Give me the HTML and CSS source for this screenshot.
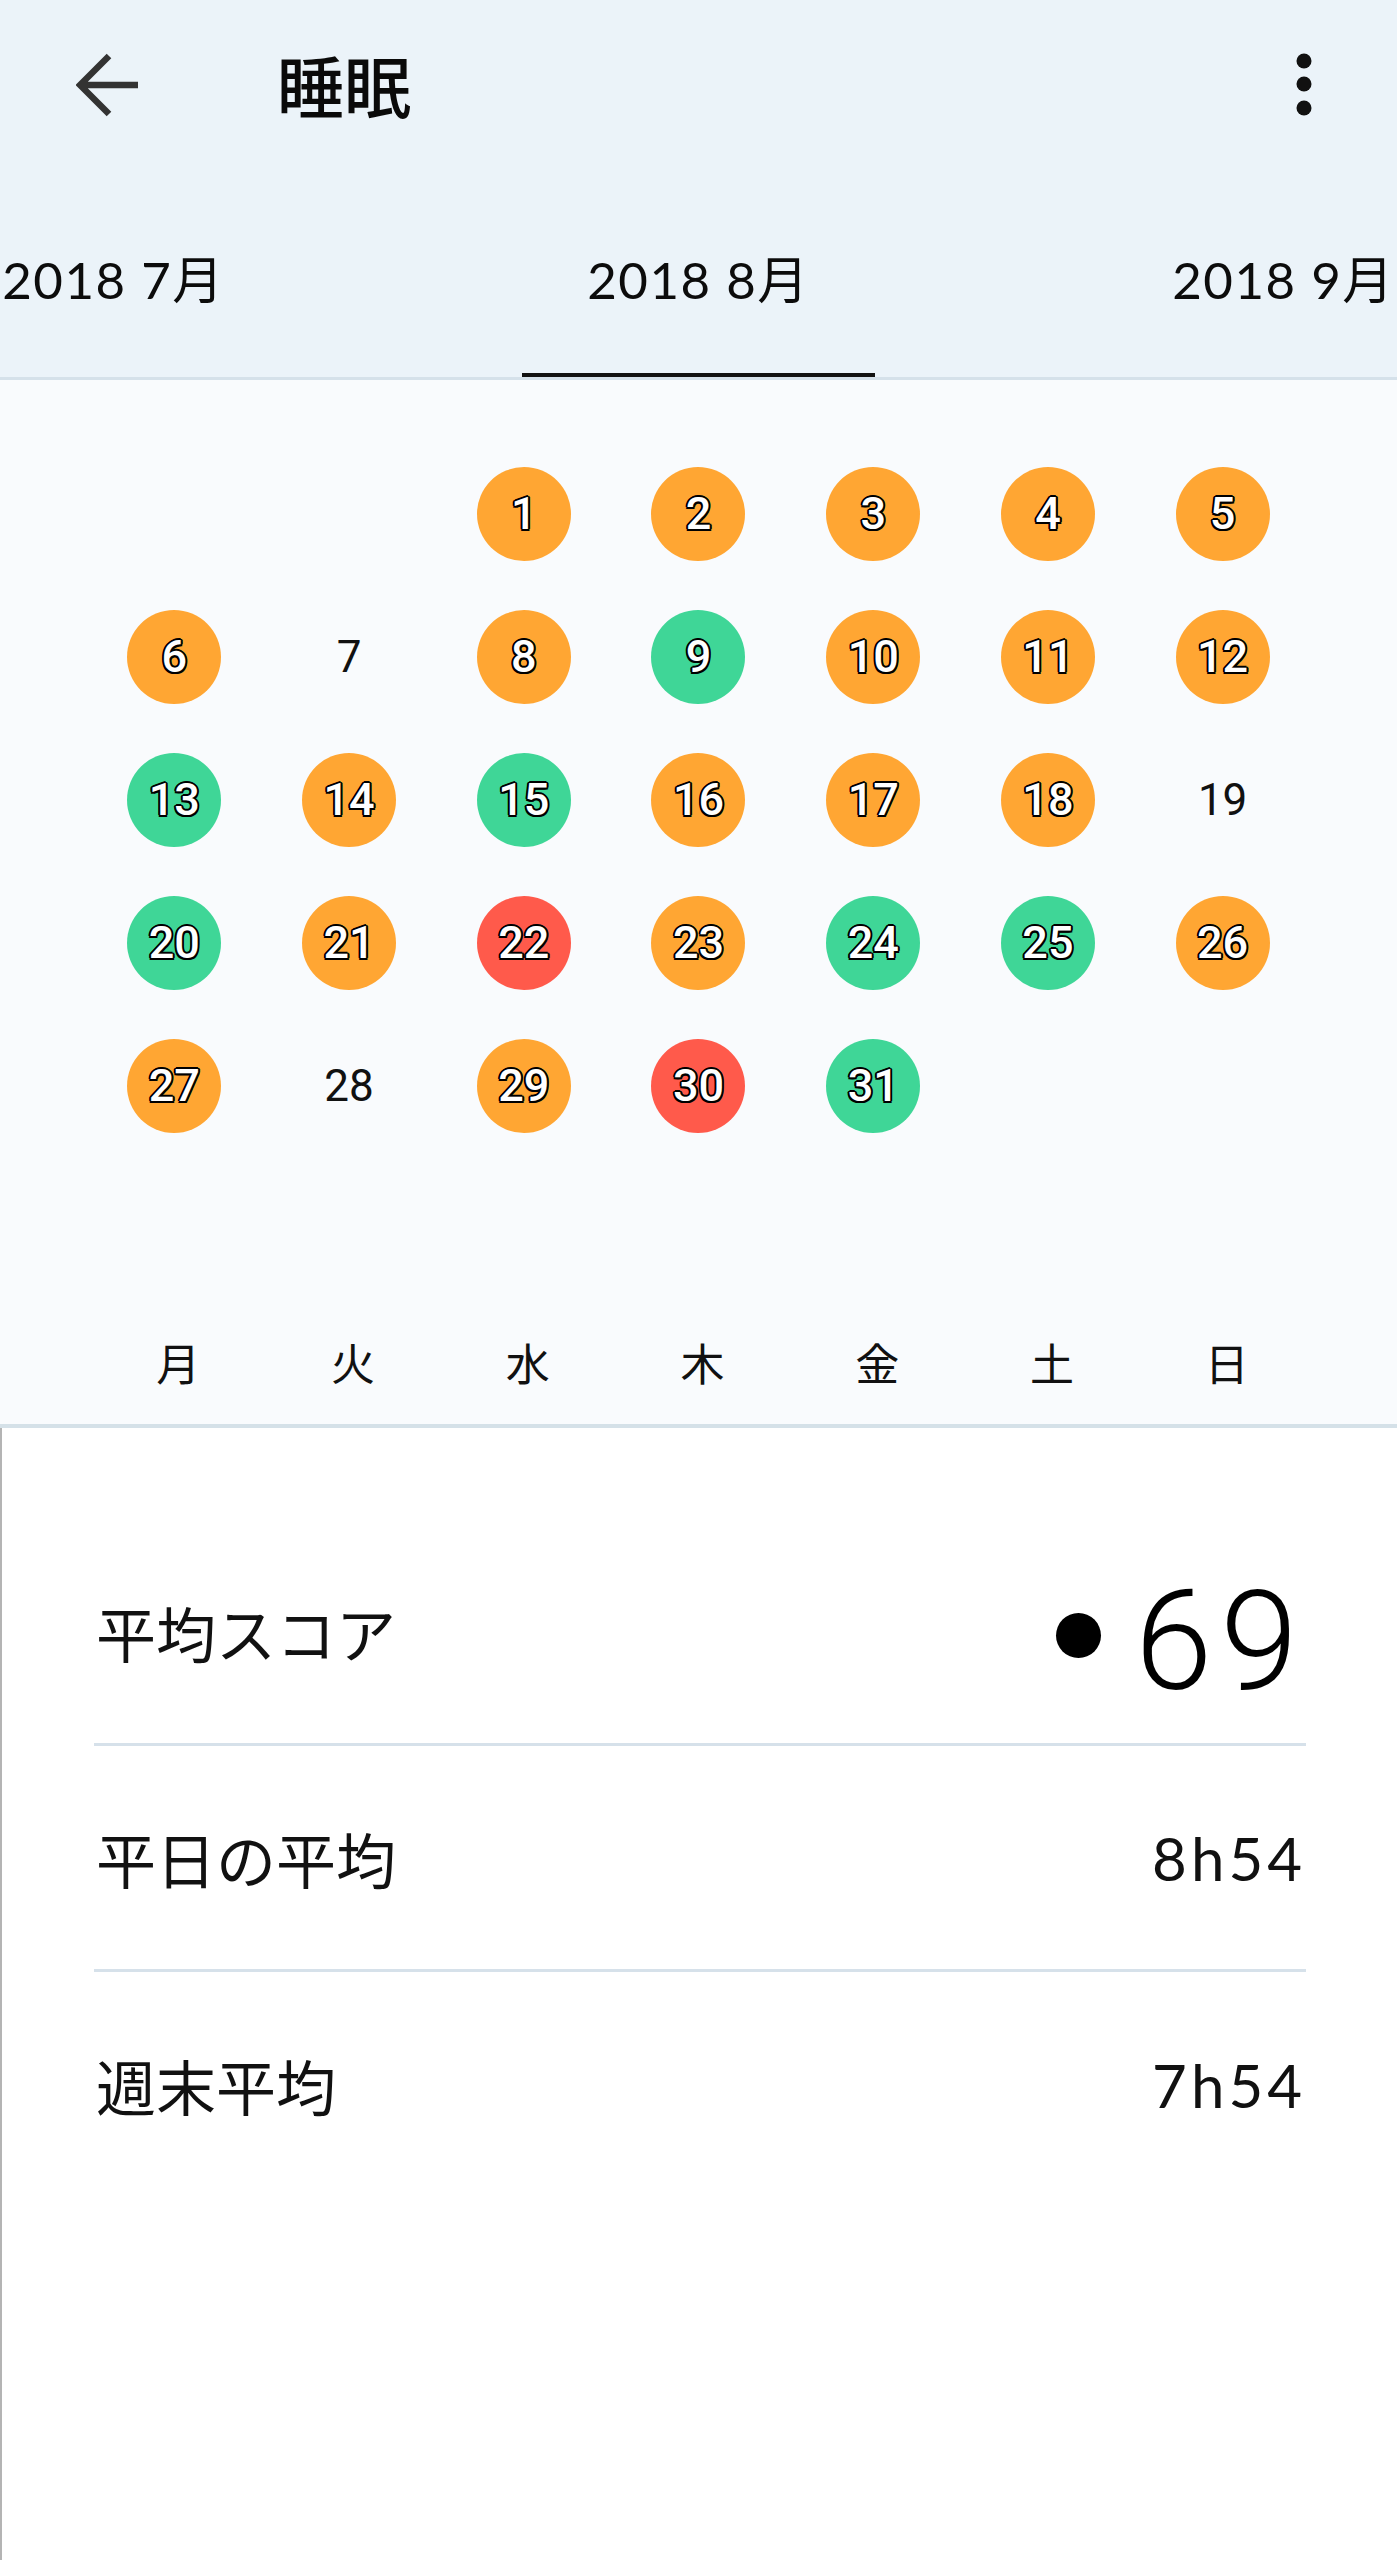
FILE: index.html
```html
<!DOCTYPE html>
<html lang="ja">
<head>
<meta charset="utf-8">
<title>睡眠</title>
<link rel="stylesheet" href="styles.css">
</head>
<body>
<div class="app">
  <header class="header">
    <div class="topbar">
      <svg class="back" width="64" height="64" viewBox="0 0 64 64" aria-hidden="true">
        <path d="M4 32 H62 M33 3 L4 32 L33 61" fill="none" stroke="#333" stroke-width="6.5" stroke-linecap="butt" stroke-linejoin="miter"/>
      </svg>
      <h1 class="title">睡眠</h1>
      <svg class="more" width="16" height="64" viewBox="0 0 16 64" aria-hidden="true">
        <circle cx="8" cy="8" r="7.5" fill="#111"/>
        <circle cx="8" cy="31" r="7.5" fill="#111"/>
        <circle cx="8" cy="55" r="7.5" fill="#111"/>
      </svg>
    </div>
    <nav class="tabs">
      <div class="tab">2018 7月</div>
      <div class="tab active">2018 8月</div>
      <div class="tab">2018 9月</div>
    </nav>
  </header>

  <section class="calendar">
    <div class="grid">
      <div class="cell"></div>
      <div class="cell"></div>
      <div class="cell"><span class="day o">1</span></div>
      <div class="cell"><span class="day o">2</span></div>
      <div class="cell"><span class="day o">3</span></div>
      <div class="cell"><span class="day o">4</span></div>
      <div class="cell"><span class="day o">5</span></div>

      <div class="cell"><span class="day o">6</span></div>
      <div class="cell"><span class="day plain">7</span></div>
      <div class="cell"><span class="day o">8</span></div>
      <div class="cell"><span class="day g">9</span></div>
      <div class="cell"><span class="day o">10</span></div>
      <div class="cell"><span class="day o">11</span></div>
      <div class="cell"><span class="day o">12</span></div>

      <div class="cell"><span class="day g">13</span></div>
      <div class="cell"><span class="day o">14</span></div>
      <div class="cell"><span class="day g">15</span></div>
      <div class="cell"><span class="day o">16</span></div>
      <div class="cell"><span class="day o">17</span></div>
      <div class="cell"><span class="day o">18</span></div>
      <div class="cell"><span class="day plain">19</span></div>

      <div class="cell"><span class="day g">20</span></div>
      <div class="cell"><span class="day o">21</span></div>
      <div class="cell"><span class="day r">22</span></div>
      <div class="cell"><span class="day o">23</span></div>
      <div class="cell"><span class="day g">24</span></div>
      <div class="cell"><span class="day g">25</span></div>
      <div class="cell"><span class="day o">26</span></div>

      <div class="cell"><span class="day o">27</span></div>
      <div class="cell"><span class="day plain">28</span></div>
      <div class="cell"><span class="day o">29</span></div>
      <div class="cell"><span class="day r">30</span></div>
      <div class="cell"><span class="day g">31</span></div>
      <div class="cell"></div>
      <div class="cell"></div>
    </div>
    <div class="weekdays">
      <div class="wd">月</div>
      <div class="wd">火</div>
      <div class="wd">水</div>
      <div class="wd">木</div>
      <div class="wd">金</div>
      <div class="wd">土</div>
      <div class="wd">日</div>
    </div>
  </section>

  <section class="stats">
    <div class="row">
      <span class="label">平均スコア</span>
      <span class="score"><span class="dot"></span><span class="big">69</span></span>
    </div>
    <div class="row">
      <span class="label">平日の平均</span>
      <span class="value">8h54</span>
    </div>
    <div class="row last">
      <span class="label">週末平均</span>
      <span class="value">7h54</span>
    </div>
  </section>
</div>
</body>
</html>
```

FILE: styles.css
```css
* { box-sizing: border-box; }

html, body {
  margin: 0;
  padding: 0;
  background: #ffffff;
}

body {
  font-family: "Noto Sans CJK JP", "Noto Sans", sans-serif;
  color: #111;
}

.app {
  width: 1397px;
  min-height: 2560px;
  background: #ffffff;
  box-shadow: inset 2px 0 0 #b4b4b4;
  overflow: hidden;
}

/* Header */
.header {
  background: #ebf3f9;
  border-bottom: 3px solid #d5e1ea;
}

.topbar {
  height: 170px;
  display: flex;
  align-items: center;
}

.back {
  margin-left: 76px;
  flex: none;
}

.title {
  margin: 0 0 0 137px;
  font-family: "Noto Sans CJK JP", sans-serif;
  font-size: 67px;
  font-weight: 500;
  line-height: 1;
  color: #0a0a0a;
  padding-bottom: 4px;
}

.more {
  margin-left: auto;
  margin-right: 85px;
  flex: none;
}

.tabs {
  height: 207px;
  display: flex;
  justify-content: center;
  gap: 232px;
}

.tab {
  flex: none;
  width: 353px;
  padding-top: 80px;
  text-align: center;
  font-family: "Lato", "Noto Sans CJK JP", sans-serif;
  font-size: 51px;
  letter-spacing: 1.5px;
  line-height: 60px;
  color: #0c0c0c;
  white-space: nowrap;
}

.tab.active {
  border-bottom: 4px solid #111;
}

/* Calendar */
.calendar {
  background: #f9fbfd;
  padding-top: 62px;
  border-bottom: 4px solid #d5e1e8;
}

.grid,
.weekdays {
  display: grid;
  grid-template-columns: repeat(7, 1fr);
  padding: 0 87px;
}

.grid {
  grid-template-rows: repeat(6, 143px);
}

.cell {
  display: flex;
  align-items: center;
  justify-content: center;
}

.day {
  width: 94px;
  height: 94px;
  border-radius: 50%;
  display: flex;
  align-items: center;
  justify-content: center;
  font-family: "Roboto", sans-serif;
  font-size: 45px;
  font-weight: 500;
  line-height: 1;
  color: #ffffff;
  text-shadow:
    2px 0 0 #000, -2px 0 0 #000, 0 2px 0 #000, 0 -2px 0 #000,
    1.5px 1.5px 0 #000, -1.5px 1.5px 0 #000, 1.5px -1.5px 0 #000, -1.5px -1.5px 0 #000;
}

.day.o { background: #ffa633; }
.day.g { background: #3fd697; }
.day.r { background: #ff5a4b; }

.day.plain {
  background: transparent;
  color: #111;
  text-shadow: none;
  font-weight: 400;
  font-size: 44px;
}

.weekdays {
  height: 124px;
  align-items: center;
}

.wd {
  text-align: center;
  font-size: 44px;
  line-height: 1;
  padding-left: 8px;
  color: #111;
}

/* Stats */
.stats {
  padding: 92px 91px 0 94px;
}

.row {
  height: 226px;
  display: flex;
  align-items: center;
  justify-content: space-between;
  border-bottom: 3px solid #d6e1ea;
}

.row.last {
  border-bottom: none;
}

.label {
  font-size: 60px;
  line-height: 1;
  color: #111;
  padding-left: 2px;
}

.score {
  display: flex;
  align-items: center;
  gap: 34px;
  padding-top: 18px;
}

.dot {
  width: 45px;
  height: 45px;
  border-radius: 50%;
  background: #000;
  margin-top: -10px;
}

.big {
  font-family: "Roboto", sans-serif;
  font-weight: 300;
  font-size: 140px;
  letter-spacing: 8px;
  line-height: 1;
  color: #000;
}

.value {
  font-family: "Lato", sans-serif;
  font-size: 60px;
  letter-spacing: 4px;
  line-height: 1;
  color: #111;
}
```
